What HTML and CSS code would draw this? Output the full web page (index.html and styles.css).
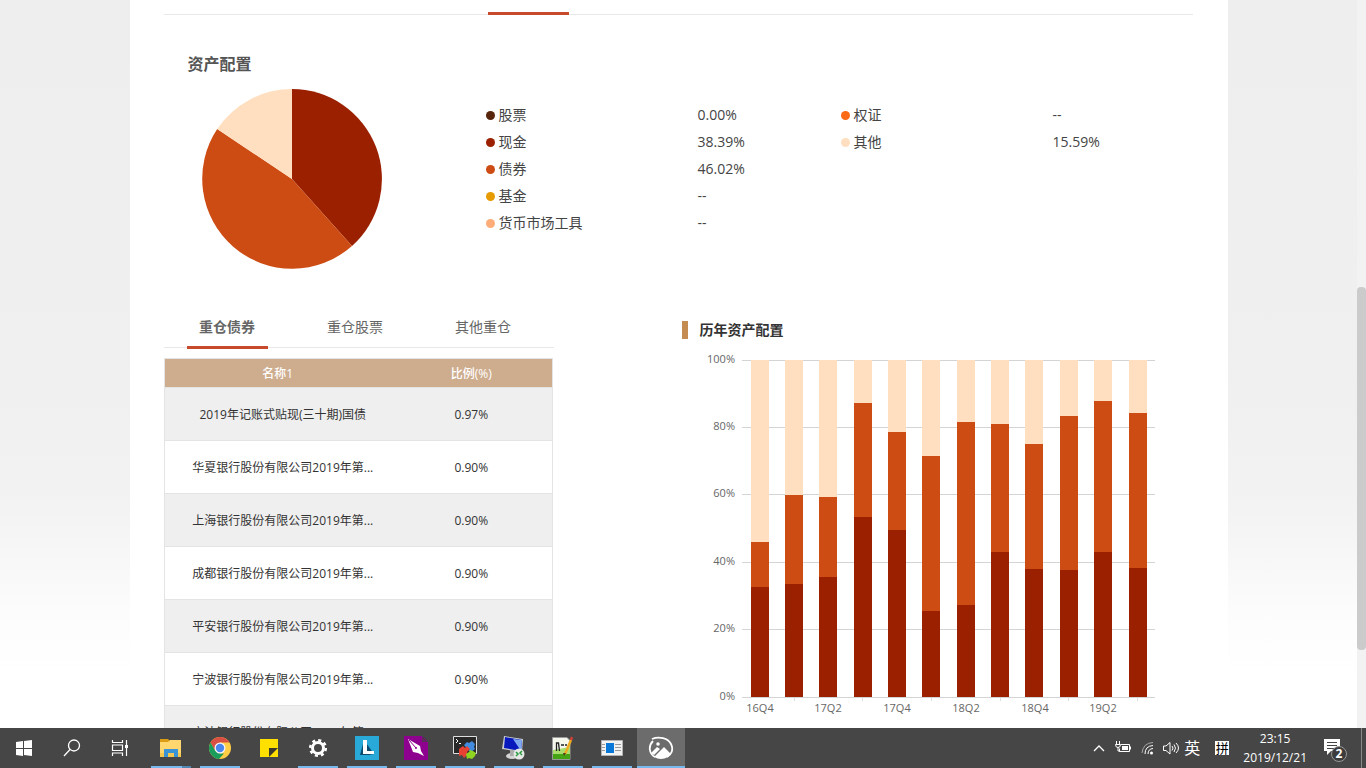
FILE: index.html
```html
<!DOCTYPE html>
<html lang="zh-CN">
<head>
<meta charset="utf-8">
<title>资产配置</title>
<link rel="stylesheet" href="styles.css">
</head>
<body>
<div class="view">
  <div class="page">
    <main class="sheet">
      <div class="section-tabs"><span class="section-marker"></span></div>

      <section class="allocation">
        <h2 class="allocation-title">资产配置</h2>
        <div class="allocation-body">
          <svg class="pie" viewBox="-90 -90 180 180" role="img" aria-label="资产配置">
            <path fill="#9a2000" d="M0 0V-90A90 90 0 0 1 60 67Z"/>
            <path fill="#cd4c14" d="M0 0L60 67A90 90 0 0 1 -74.800 -50Z"/>
            <path fill="#ffdfbf" d="M0 0L-74.800 -50A90 90 0 0 1 0 -90Z"/>
          </svg>
          <div class="legend">
            <dl class="legend-col">
              <dt class="c-stock">股票</dt><dd>0.00%</dd>
              <dt class="c-cash">现金</dt><dd>38.39%</dd>
              <dt class="c-bond">债券</dt><dd>46.02%</dd>
              <dt class="c-fund">基金</dt><dd>--</dd>
              <dt class="c-money">货币市场工具</dt><dd>--</dd>
            </dl>
            <dl class="legend-col">
              <dt class="c-warrant">权证</dt><dd>--</dd>
              <dt class="c-other">其他</dt><dd>15.59%</dd>
            </dl>
          </div>
        </div>
      </section>

      <div class="columns">
        <section>
          <div class="tabs">
            <button class="tab active" type="button">重仓债券</button>
            <button class="tab" type="button">重仓股票</button>
            <button class="tab" type="button">其他重仓</button>
          </div>
          <table class="holdings">
            <thead><tr><th class="name">名称1</th><th>比例(%)</th></tr></thead>
            <tbody>
              <tr><td>2019年记账式贴现(三十期)国债</td><td>0.97%</td></tr>
              <tr><td>华夏银行股份有限公司2019年第...</td><td>0.90%</td></tr>
              <tr><td>上海银行股份有限公司2019年第...</td><td>0.90%</td></tr>
              <tr><td>成都银行股份有限公司2019年第...</td><td>0.90%</td></tr>
              <tr><td>平安银行股份有限公司2019年第...</td><td>0.90%</td></tr>
              <tr><td>宁波银行股份有限公司2019年第...</td><td>0.90%</td></tr>
              <tr><td>宁波银行股份有限公司2019年第...</td><td>0.90%</td></tr>
            </tbody>
          </table>
        </section>

        <section class="history">
          <h3 class="history-title">历年资产配置</h3>
          <svg class="chart" viewBox="682 350 480 370" role="img" aria-label="历年资产配置">
            <g fill="#d4d4d4">
              <rect x="742" y="360" width="413" height="1"/>
              <rect x="742" y="427" width="413" height="1"/>
              <rect x="742" y="494" width="413" height="1"/>
              <rect x="742" y="562" width="413" height="1"/>
              <rect x="742" y="629" width="413" height="1"/>
              <rect x="742" y="697" width="413" height="1"/>
            </g>
            <path stroke="#dcdfe4" d="M794.500 698V701M862.500 698V701M931.500 698V701M1000.500 698V701M1068.500 698V701M1137.500 698V701"/>
            <path class="s-other" d="M751 360h18v337h-18zM785 360h18v337h-18zM819 360h18v337h-18zM854 360h18v337h-18zM888 360h18v337h-18zM922 360h18v337h-18zM957 360h18v337h-18zM991 360h18v337h-18zM1025 360h18v337h-18zM1060 360h18v337h-18zM1094 360h18v337h-18zM1129 360h18v337h-18z"/>
            <path class="s-bond" d="M751 542h18V697h-18zM785 495h18V697h-18zM819 497h18V697h-18zM854 403h18V697h-18zM888 432h18V697h-18zM922 456h18V697h-18zM957 422h18V697h-18zM991 424h18V697h-18zM1025 444h18V697h-18zM1060 416h18V697h-18zM1094 401h18V697h-18zM1129 413h18V697h-18z"/>
            <path class="s-cash" d="M751 587h18V697h-18zM785 584h18V697h-18zM819 577h18V697h-18zM854 517h18V697h-18zM888 530h18V697h-18zM922 611h18V697h-18zM957 605h18V697h-18zM991 552h18V697h-18zM1025 569h18V697h-18zM1060 570h18V697h-18zM1094 552h18V697h-18zM1129 568h18V697h-18z"/>
            <g class="axis axis-y">
              <text x="735" y="363">100%</text><text x="735" y="430">80%</text><text x="735" y="497">60%</text>
              <text x="735" y="565">40%</text><text x="735" y="632">20%</text><text x="735" y="700">0%</text>
            </g>
            <g class="axis axis-x">
              <text x="760" y="712">16Q4</text><text x="828" y="712">17Q2</text><text x="897" y="712">17Q4</text>
              <text x="966" y="712">18Q2</text><text x="1035" y="712">18Q4</text><text x="1103" y="712">19Q2</text>
            </g>
          </svg>
        </section>
      </div>
    </main>
  </div>
  <div class="scroll-track"><div class="scroll-thumb"></div></div>
</div>

<footer class="taskbar">
  <div class="system">
    <button class="task" type="button" aria-label="开始"><svg width="24" height="24" viewBox="0 0 24 24"><path fill="#fff" d="M4 6l7-1v7H4zM12 5l8-1v8h-8zM4 13h7v7l-7-1zM12 13h8v7l-8-1z"/></svg></button>
    <button class="task" type="button" aria-label="搜索"><svg width="24" height="24" viewBox="0 0 24 24" fill="none" stroke="#fff" stroke-width="1.300"><circle cx="14" cy="9.500" r="5.500"/><path d="M10 13.500L4 20"/></svg></button>
    <button class="task" type="button" aria-label="任务视图"><svg width="24" height="24" viewBox="0 0 24 24" fill="none" stroke="#fff" stroke-width="1.200"><path d="M4.500 4v2.500h10V4M4.500 20v-3h10v3M4.500 9h10v5.500h-10zM18.500 4v16"/><path fill="#fff" stroke="none" d="M17 9h3v3h-3z"/></svg></button>
  </div>
  <div class="apps">
    <button class="task open stacked" type="button" aria-label="文件资源管理器"><svg width="24" height="24" viewBox="0 0 24 24"><path fill="#dc9d15" d="M1 3h8l2 2v3H1z"/><path fill="#ffd76e" d="M1 6h8l2-2h11v17H1z"/><path fill="#f5c851" d="M1 17h21v4H1z"/><path fill="#3a94d6" d="M5 13h14v8h-4v-4H9v4H5z"/></svg></button>
    <button class="task open" type="button" aria-label="Chrome"><svg width="24" height="24" viewBox="0 0 24 24"><circle cx="12" cy="12" r="11" fill="#ffcd46"/><path fill="#d94f43" d="M2.500 6.500A11 11 0 0 1 21.500 6.500H12L7 14.500z"/><path fill="#1a9c5b" d="M2.500 6.500L7.200 14.700 12 17.500H16L11 23A11 11 0 0 1 2.500 6.500z"/><circle cx="12" cy="12" r="5.500" fill="#f4f4f4"/><circle cx="12" cy="12" r="4.200" fill="#4a86ee"/></svg></button>
    <button class="task" type="button" aria-label="便笺"><svg width="24" height="24" viewBox="0 0 24 24"><path fill="#ffe000" d="M3 3h18v18H3z"/><path fill="#3d3a2c" d="M12 12h9l-9 9z"/></svg></button>
    <button class="task open" type="button" aria-label="设置"><svg width="24" height="24" viewBox="0 0 24 24"><circle cx="12" cy="12" r="5.500" fill="none" stroke="#fff" stroke-width="3"/><circle cx="12" cy="12" r="7.800" fill="none" stroke="#fff" stroke-width="2.500" stroke-dasharray="3.060 3.060"/></svg></button>
    <button class="task open" type="button" aria-label="Lingoes"><svg width="24" height="24" viewBox="0 0 24 24"><path fill="#28a9d8" d="M0 0h24v24H0z"/><path fill="#0c4a70" d="M9 4L5 19h9l5-1z"/><path fill="#fff" d="M8 4h4v11h7v3H8z"/></svg></button>
    <button class="task open" type="button" aria-label="画笔"><svg width="24" height="24" viewBox="0 0 24 24"><path fill="#8e008e" d="M0 0h18v6h6v18H0z"/><path fill="none" stroke="#70106f" d="M19 1v4h4z"/><path fill="#fff" d="M4 3l12 7 1 5 3 5-6-3-5-1z"/><path stroke="#8e008e" d="M5 4l7 8"/><circle cx="12" cy="12" r="1" fill="#8e008e"/></svg></button>
    <button class="task open" type="button" aria-label="终端"><svg width="24" height="24" viewBox="0 0 24 24"><path fill="#282828" stroke="#ddd" d="M.5.500h23v17H.500z"/><path fill="none" stroke="#fff" d="M3 3l2 2-2 2M6 7.500h2"/><path fill="#438bdf" d="M11 9l3-3 2 1 3-2 3 3-1 3 1 2-4 3-3-2z"/><path fill="#e84233" d="M6 13l4-3 2 2 2-2 3 3-3 3 1 2-4 4-2-3-3 1z"/><path fill="#8ed421" d="M13 18l3-2 1-2 3 1 3 2-1 3-3 3-3-1-2 1z"/></svg></button>
    <button class="task open" type="button" aria-label="远程桌面"><svg width="24" height="24" viewBox="0 0 24 24"><path fill="#c9cdd2" d="M2 0l19 3-1 13L0 13z"/><path fill="#0718bd" d="M3 1l17 3-1 11L2 12z"/><path fill="#7fa9ee" d="M11 3l9 1-1 11z"/><ellipse cx="10" cy="20" rx="6" ry="3" fill="#d5d5d5"/><path fill="#aaa" d="M8 14h4v6H8z"/><circle cx="17" cy="18" r="5.500" fill="#e5e8e5"/><path fill="none" stroke="#269b3e" stroke-width="1.500" d="M14 16l2 2-2 2M20 15l-2 2 2 2"/></svg></button>
    <button class="task open" type="button" aria-label="Notepad++"><svg width="24" height="24" viewBox="0 0 24 24"><path fill="#f5f7ed" stroke="#999" d="M1.500 1.500H16l3 3v19H1.500z"/><path fill="#a9dd6c" d="M2 14l17-3v12H2z"/><path fill="#45a414" d="M2 18h17v5H2z"/><path fill="none" stroke="#222" stroke-width="1.300" d="M5.500 15V7h2l1 8M10 9h3M14 9h2"/><path stroke="#edaa22" stroke-width="2.500" d="M14 18L20 4"/><path stroke="#cf4037" stroke-width="2.500" d="M20 4l1-3"/><path fill="#553b20" d="M12 17l1 3 2-3z"/></svg></button>
    <button class="task open" type="button" aria-label="窗口"><svg width="24" height="24" viewBox="0 0 24 24"><path fill="#f2f2f2" stroke="#b3b3b3" d="M1.500 4.500h21v15h-21z"/><path fill="#0878d8" d="M6 7h8v10H6z"/><path stroke="#999" d="M2 8.500h3M2 11.500h3M2 14.500h3M15 8.500h6M15 11.500h6M15 14.500h6"/></svg></button>
    <button class="task open current" type="button" aria-label="图片查看"><svg width="26" height="24" viewBox="0 0 26 24"><path fill="none" stroke="#fff" stroke-width="1.800" d="M5 5C0 10 1 18 7 21M4 3C11 0 20 2 23 8C26 14 23 19 19 21"/><path fill="#fff" d="M3 17l6-6 3 2-6 6zM6 21l10-10 7 7-3 3q-7 4-14 0z"/><circle cx="10" cy="8" r="1.800" fill="#fff"/></svg></button>
  </div>
  <div class="tray">
    <svg width="14" height="24" viewBox="0 0 14 24" fill="none" stroke="#fff" stroke-width="1.300"><path d="M2 15l5-5 5 5"/></svg>
    <svg width="18" height="24" viewBox="0 0 18 24" fill="none" stroke="#fff"><path d="M7 8.500h8.500v7h-10v-3M16.500 10.500v3"/><path fill="#fff" stroke="none" d="M8 10h6v4H8z"/><path d="M2.500 5v3M5.500 5v3M1.500 8.500h5q0 3-2.500 3t-2.500-3M4 11v4h2"/></svg>
    <svg width="14" height="24" viewBox="0 0 14 24" fill="none" stroke="#fff"><path stroke="#aaa" d="M2 17Q3 7 13 6.500"/><path d="M5 18Q5 10 13 9.500M8 18Q8 13 13 12.500"/><circle cx="11.500" cy="17" r="1.500" fill="#fff" stroke="none"/></svg>
    <svg width="18" height="24" viewBox="0 0 18 24" fill="none" stroke="#fff"><path d="M1.500 10v4.500H4l4 3.500V6.500L4 10zM10 10q2 2 0 4.500M12 8.500q3 3.500 0 7.500M14 7q5 5 0 10"/></svg>
    <span class="ime">英</span>
    <span class="ime-mode">拼</span>
    <time class="clock" datetime="2019-12-21T23:15"><span>23:15</span><span>2019/12/21</span></time>
    <button class="notice" type="button" aria-label="通知"><svg width="26" height="26" viewBox="0 0 26 26"><path fill="#fff" d="M1 2h16v12H8l-4 4v-4H1z"/><path stroke="#444" d="M4 5.500h10M4 8.500h10M4 11.500h7"/><circle cx="16" cy="17" r="7.500" fill="#3c3c3c" stroke="#999"/><text class="notice-count" x="16" y="21">2</text></svg></button>
  </div>
</footer>
</body>
</html>
```
FILE: styles.css
```css
* { box-sizing: border-box; }

body {
  margin: 0;
  height: 100vh;
  display: flex;
  flex-direction: column;
  overflow: hidden;
  background: #fff;
  color: #333;
  font: 14px/20px "Open Sans", "Noto Sans CJK SC", sans-serif;
}

button {
  padding: 0;
  border: 0;
  background: none;
  color: inherit;
  font: inherit;
}

h2, h3, dl, dd { margin: 0; }

.view {
  flex: 1;
  min-height: 0;
  display: flex;
}

.page {
  flex: 1;
  overflow: hidden;
  background: linear-gradient(#eee 0, #f0f0f0 400px, #f3f3f3 510px, #fcfcfc 610px, #fff 670px);
}

.sheet {
  max-width: 1098px;
  margin: 0 auto;
  padding: 0 35px 0 34px;
  background: #fff;
}

.section-tabs {
  height: 15px;
  padding: 12px 0 0 324px;
  background: linear-gradient(#e8e8e8, #e8e8e8) bottom / 100% 1px no-repeat;
}

.section-marker {
  display: block;
  width: 81px;
  height: 3px;
  background: #c84a2d;
}

.allocation { padding: 37px 24px 0; }

.allocation-title {
  color: #555;
  font-size: 16px;
  line-height: 24px;
}

.allocation-body {
  display: flex;
  gap: 104px;
  padding: 13px 0 0 14px;
}

.pie {
  flex: none;
  width: 180px;
  height: 180px;
}

.legend {
  flex: 1;
  display: grid;
  grid-template-columns: 355px 1fr;
  padding-top: 12px;
  color: #444;
  line-height: 27px;
}

.legend-col {
  display: grid;
  grid-template-columns: 212px auto;
  align-content: start;
}

.legend dt {
  display: flex;
  align-items: center;
  gap: 4px;
}

.legend dt::before {
  content: "";
  width: 9px;
  height: 9px;
  margin-top: 2px;
  border-radius: 50%;
  background: var(--dot);
}

.c-stock { --dot: #56250b; }
.c-cash { --dot: #9a2000; }
.c-bond { --dot: #cd4c14; }
.c-fund { --dot: #e69b00; }
.c-money { --dot: #ffad78; }
.c-warrant { --dot: #fb6b15; }
.c-other { --dot: #ffdfbf; }

.columns {
  display: grid;
  grid-template-columns: 390px 1fr;
  gap: 128px;
  padding-top: 37px;
}

.tabs {
  display: flex;
  gap: 47px;
  padding-left: 23px;
  background: linear-gradient(#e8e8e8, #e8e8e8) bottom 1px left / 100% 1px no-repeat;
}

.tab {
  width: 81px;
  height: 43px;
  padding-top: 1px;
  border-bottom: 3px solid transparent;
  color: #666;
}

.tab.active {
  border-bottom-color: #c84a2d;
  font-weight: bold;
}

.holdings {
  width: 389px;
  margin-top: 9px;
  border: 1px solid #e4e4e4;
  border-collapse: collapse;
  table-layout: fixed;
  font-size: 12px;
  text-align: center;
}

.holdings th {
  height: 29px;
  padding: 2px 0 0;
  background: #cead8f;
  color: #fff;
  font-weight: 500;
}

.holdings .name { width: 227px; }

.holdings td {
  height: 53px;
  padding: 2px 0 0;
  border-top: 1px solid #e4e4e4;
}

.holdings td:first-child { padding-left: 10px; }

.holdings tbody tr:nth-child(odd) { background: #efefef; }

.history { padding-top: 15px; }

.history-title {
  padding-left: 12px;
  border-left: 6px solid #c48c50;
  font-size: 14px;
  line-height: 18px;
}

.chart {
  display: block;
  width: 480px;
  height: 370px;
  margin-top: 11px;
}

.s-other { fill: #ffdfbf; }
.s-bond { fill: #cd4c14; }
.s-cash { fill: #9a2000; }

.axis {
  fill: #666;
  font-size: 11px;
}

.axis-y { text-anchor: end; }
.axis-x { text-anchor: middle; }

.scroll-track {
  width: 9px;
  padding-top: 287px;
  background: #f2f2f2;
}

.scroll-thumb {
  height: 363px;
  border-radius: 4px;
  background: #cbcbcb;
}

.taskbar {
  flex: none;
  height: 40px;
  display: flex;
  background: #464646;
  color: #fff;
}

.system { display: flex; }

.apps {
  display: flex;
  gap: 1px;
  margin-left: 3px;
}

.task {
  width: 48px;
  height: 40px;
  display: flex;
  align-items: center;
  justify-content: center;
}

.task.open {
  background: linear-gradient(#76b9ed, #76b9ed) bottom / 40px 2px no-repeat;
}

.task.stacked {
  background: linear-gradient(90deg, #76b9ed 31px, #5087b0 31px) bottom / 40px 2px no-repeat;
}

.task.current {
  background: linear-gradient(#76b9ed, #76b9ed) bottom / 100% 2px no-repeat #6c6c6c;
}

.tray {
  flex: 1;
  display: flex;
  align-items: center;
  justify-content: flex-end;
  gap: 8px;
  margin-right: 4px;
  padding-right: 12px;
  border-right: 1px solid #888;
}

.ime {
  margin-left: -4px;
  font-size: 16px;
}

.ime-mode {
  width: 14px;
  margin: 0 6px 0 7px;
  background: #fff;
  color: #000;
  font-size: 13px;
  line-height: 14px;
  text-align: center;
}

.clock {
  display: grid;
  font-size: 12px;
  line-height: 19px;
  text-align: center;
}

.notice {
  display: flex;
  margin: 4px 0 0 8px;
}

.notice-count {
  fill: #fff;
  font-size: 12px;
  font-weight: bold;
  text-anchor: middle;
}
```
